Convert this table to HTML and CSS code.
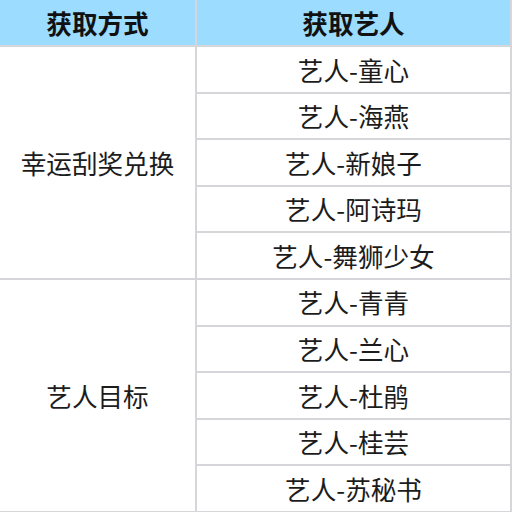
FILE: index.html
```html
<!DOCTYPE html>
<html>
<head>
<meta charset="utf-8">
<link rel="stylesheet" href="styles.css">
</head>
<body>
<table class="tbl">
  <colgroup><col class="c1"><col class="c2"></colgroup>
  <thead>
    <tr class="head"><th>获取方式</th><th>获取艺人</th></tr>
  </thead>
  <tbody>
    <tr><td class="grp" rowspan="5">幸运刮奖兑换</td><td>艺人-童心</td></tr>
    <tr><td>艺人-海燕</td></tr>
    <tr><td>艺人-新娘子</td></tr>
    <tr><td>艺人-阿诗玛</td></tr>
    <tr><td>艺人-舞狮少女</td></tr>
    <tr><td class="grp" rowspan="5">艺人目标</td><td>艺人-青青</td></tr>
    <tr><td>艺人-兰心</td></tr>
    <tr><td>艺人-杜鹃</td></tr>
    <tr><td>艺人-桂芸</td></tr>
    <tr><td>艺人-苏秘书</td></tr>
  </tbody>
</table>
</body>
</html>
```
FILE: styles.css
```css
html, body {
  margin: 0;
  padding: 0;
  background: #ffffff;
  overflow: hidden;
}
.tbl {
  border-collapse: collapse;
  table-layout: fixed;
  width: 511px;
  font-family: "Microsoft YaHei", "Noto Sans CJK SC", "Noto Sans", sans-serif;
  font-size: 25.6px;
  color: #1c1c1c;
}
.c1 { width: 196px; }
.c2 { width: 315px; }
.tbl th, .tbl td {
  border: 2px solid #d5d5da;
  padding: 0;
  text-align: center;
  vertical-align: middle;
  line-height: 1;
}
.tbl tr > :first-child { border-left: none; }
.head th {
  border-top: none;
  background: #9cdcfe;
  height: 45px;
  font-weight: bold;
  color: #111111;
}
.tbl tbody tr { height: 46.6px; }
```
